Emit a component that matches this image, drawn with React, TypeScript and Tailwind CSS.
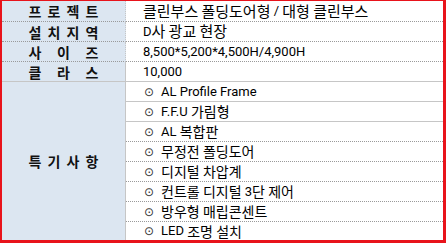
const specs = [
  { label: ['프', '로', '젝', '트'], value: '클린부스 폴딩도어형 / 대형 클린부스' },
  { label: ['설', '치', '지', '역'], value: 'D사 광교 현장' },
  { label: ['사', '이', '즈'], value: '8,500*5,200*4,500H/4,900H' },
  { label: ['클', '라', '스'], value: '10,000' },
];

const notes = [
  'AL Profile Frame',
  'F.F.U 가림형',
  'AL 복합판',
  '무정전 폴딩도어',
  '디지털 차압계',
  '컨트롤 디지털 3단 제어',
  '방우형 매립콘센트',
  'LED 조명 설치',
];

const latin = { fontFamily: 'Roboto, "Noto Sans CJK KR", sans-serif' };
const hangul = { fontFamily: '"Noto Sans CJK KR", sans-serif' };

// Korean runs read a bit larger than the latin ones in the sheet
function Mixed({ text, big }: { text: string; big?: boolean }) {
  return (
    <>
      {text.split(/([\uac00-\ud7a3]+)/).map((part, i) =>
        /[\uac00-\ud7a3]/.test(part) ? (
          <span key={i} className={big ? 'text-[15px]' : 'text-[14px]'} style={hangul}>
            {part}
          </span>
        ) : (
          <span key={i} className="text-[13px]" style={latin}>
            {part.replace(/ /g, '\u00a0')}
          </span>
        )
      )}
    </>
  );
}

function Label({ chars }: { chars: string[] }) {
  return (
    <div
      className="w-[70px] mx-auto flex justify-between text-[14px] font-bold text-[#111] leading-none"
      style={hangul}
    >
      {chars.map((c, i) => (
        <span key={i}>{c}</span>
      ))}
    </div>
  );
}

export default function App() {
  return (
    <div className="w-[446px] h-[243px] bg-white">
      <div className="w-full h-full border-t border-l-2 border-r-[3px] border-b-[3px] border-[#e8131b] grid grid-cols-[124px_1fr] grid-rows-[21px_repeat(10,20px)_18px]">
        {specs.map((row, i) => {
          const line = i === 3 ? 'border-solid border-[#c6c6c6]' : 'border-dotted border-[#9a9a9a]';
          return [
            <div
              key={`l${i}`}
              className={`bg-[#dce6f1] border-r border-r-[#c6c6c6] border-b flex items-center ${line}`}
            >
              <Label chars={row.label} />
            </div>,
            <div
              key={`v${i}`}
              className={`border-b pl-[17px] flex items-center text-black whitespace-nowrap ${line}`}
            >
              <Mixed text={row.value} big />
            </div>,
          ];
        })}

        <div className="row-span-8 bg-[#dce6f1] border-r border-[#c6c6c6] flex items-center">
          <Label chars={['특', '기', '사', '항']} />
        </div>

        {notes.map((note, i) => {
          const line =
            i === notes.length - 1
              ? ''
              : i < 2
              ? 'border-b border-solid border-[#c6c6c6]'
              : 'border-b border-dotted border-[#9a9a9a]';
          return (
            <div
              key={note}
              className={`pl-[18px] flex items-center text-black whitespace-nowrap ${line}`}
            >
              <span
                className="w-[17px] text-[12px] text-[#333]"
                style={{ fontFamily: '"DejaVu Sans", sans-serif' }}
              >
                ⊙
              </span>
              <Mixed text={note} />
            </div>
          );
        })}
      </div>
    </div>
  );
}
